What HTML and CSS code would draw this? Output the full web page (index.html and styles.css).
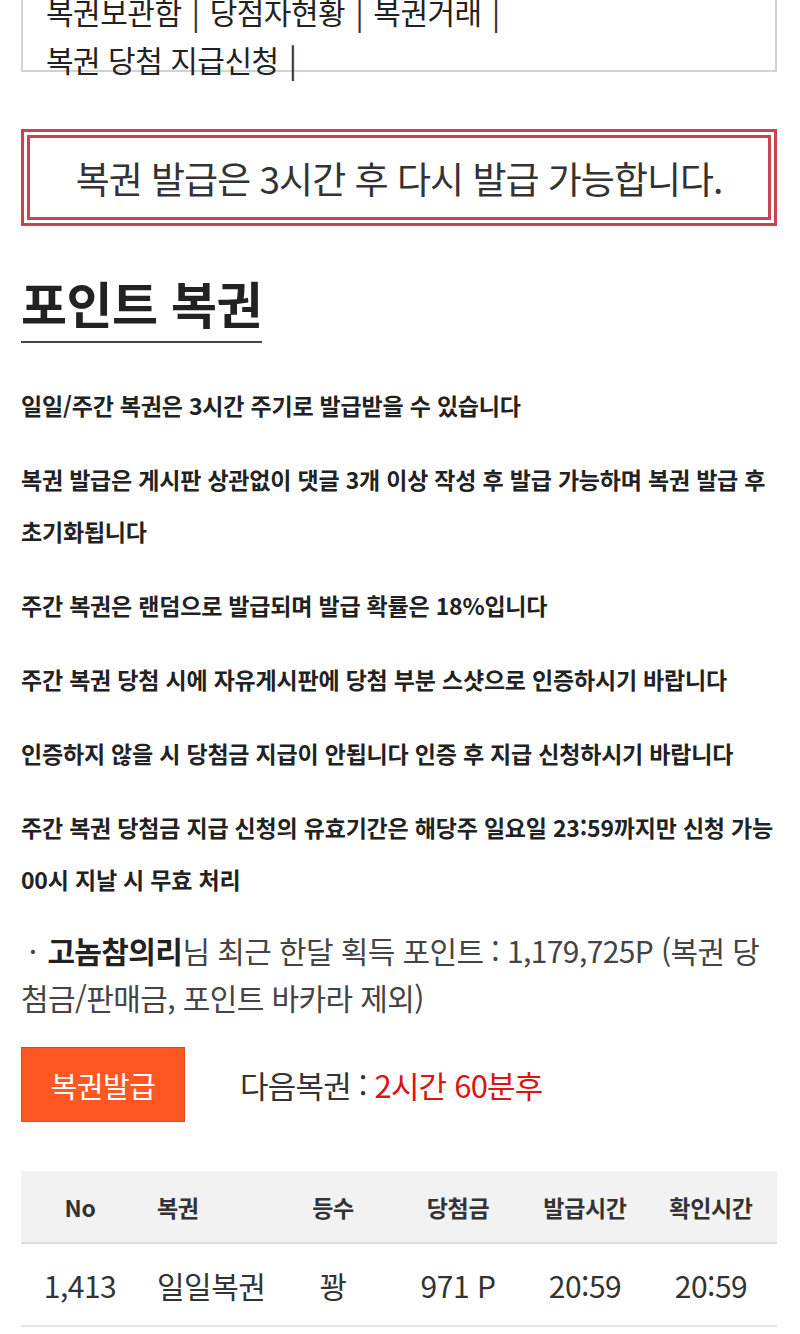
FILE: index.html
```html
<!DOCTYPE html>
<html lang="ko">
<head>
<meta charset="utf-8">
<title>포인트 복권</title>
<link rel="stylesheet" href="styles.css">
</head>
<body>
<div class="page">
  <nav class="subnav">
    <a class="navlink">복권보관함</a><span class="sep">|</span><a class="navlink">당점자현황</a><span class="sep">|</span><a class="navlink">복권거래</a><span class="sep">|</span><br><a class="navlink">복권 당첨 지급신청</a><span class="sep">|</span>
  </nav>

  <div class="alert">복권 발급은 3시간 후 다시 발급 가능합니다.</div>

  <h2 class="title">포인트 복권</h2>

  <div class="rules">
    <p>일일/주간 복권은 3시간 주기로 발급받을 수 있습니다</p>
    <p>복권 발급은 게시판 상관없이 댓글 3개 이상 작성 후 발급 가능하며 복권 발급 후 초기화됩니다</p>
    <p>주간 복권은 랜덤으로 발급되며 발급 확률은 18%입니다</p>
    <p>주간 복권 당첨 시에 자유게시판에 당첨 부분 스샷으로 인증하시기 바랍니다</p>
    <p>인증하지 않을 시 당첨금 지급이 안됩니다 인증 후 지급 신청하시기 바랍니다</p>
    <p>주간 복권 당첨금 지급 신청의 유효기간은 해당주 일요일 23:59까지만 신청 가능 00시 지날 시 무효 처리</p>
  </div>

  <p class="points">&nbsp;· <strong>고놈참의리</strong>님 최근 한달 획득 포인트 : 1,179,725P (복권 당첨금/판매금, 포인트 바카라 제외)</p>

  <div class="issue">
    <button class="btn-issue" type="button">복권발급</button>
    <span class="next">다음복권 : <span class="next-time">2시간 60분후</span></span>
  </div>

  <table class="list">
    <thead>
      <tr>
        <th class="c-no">No</th>
        <th class="c-name">복권</th>
        <th class="c-rank">등수</th>
        <th class="c-prize">당첨금</th>
        <th class="c-issued">발급시간</th>
        <th class="c-checked">확인시간</th>
      </tr>
    </thead>
    <tbody>
      <tr>
        <td class="c-no">1,413</td>
        <td class="c-name">일일복권</td>
        <td class="c-rank">꽝</td>
        <td class="c-prize">971 P</td>
        <td class="c-issued">20:59</td>
        <td class="c-checked">20:59</td>
      </tr>
    </tbody>
  </table>
</div>
</body>
</html>
```

FILE: styles.css
```css
html, body {
  margin: 0;
  padding: 0;
  background: #fff;
}
body {
  font-family: "Noto Sans CJK KR", "Noto Sans", sans-serif;
  color: #333;
  overflow: hidden;
}
.page {
  width: 756px;
  margin-left: 21px;
}
.subnav {
  display: block;
  margin-top: -40px;
  height: 83.5px;
  padding: 24.5px 23px 0 23px;
  border: 2px solid #d2d2d2;
  font-size: 30px;
  line-height: 47px;
  color: #222;
  letter-spacing: -0.5px;
}
.navlink {
  color: #222;
  text-decoration: none;
}
.sep {
  display: inline-block;
  margin: 0 10px;
  font-weight: 400;
  font-size: 32px;
  color: #333;
}
.alert {
  margin-top: 57px;
  height: 79px;
  border: 9px double #c9424f;
  display: flex;
  align-items: center;
  justify-content: center;
  font-size: 37px;
  color: #333;
  letter-spacing: -1px;
}
.title {
  display: inline-block;
  margin: 46px 0 0 0;
  padding-bottom: 9px;
  border-bottom: 2px solid #444;
  font-size: 50px;
  line-height: 60px;
  font-weight: 700;
  color: #222;
  letter-spacing: -0.5px;
}
.rules {
  margin-top: 36px;
}
.rules p {
  margin: 0 0 22px 0;
  font-size: 23px;
  line-height: 52px;
  font-weight: 700;
  color: #222;
  letter-spacing: -0.2px;
  word-break: keep-all;
}
.points {
  margin: 4px 0 0 0;
  font-size: 30px;
  line-height: 47px;
  color: #444;
  letter-spacing: -0.6px;
}
.points strong {
  font-weight: 700;
  color: #222;
  margin-left: 3px;
}
.issue {
  margin-top: 26px;
  display: flex;
  align-items: center;
}
.btn-issue {
  width: 164px;
  height: 75px;
  background: #ff5722;
  border: 1px solid #e24a1c;
  color: #fff;
  font-family: inherit;
  font-size: 29px;
  letter-spacing: -0.5px;
  padding: 0;
}
.next {
  margin-left: 55px;
  font-size: 31px;
  color: #333;
  letter-spacing: -0.8px;
}
.next-time {
  color: #e01212;
}
.list {
  margin-top: 49px;
  width: 756px;
  border-collapse: collapse;
  table-layout: fixed;
}
.list th {
  height: 71px;
  background: #f2f2f2;
  border-bottom: 2px solid #dcdcdc;
  font-size: 23px;
  font-weight: 700;
  color: #333;
  padding: 0;
  letter-spacing: -0.3px;
}
.list td {
  height: 81px;
  border-bottom: 2px solid #e4e4e4;
  font-size: 30px;
  color: #333;
  padding: 0;
  letter-spacing: -0.5px;
}
.c-no { width: 118px; text-align: center; }
.list .c-name { width: 118px; text-align: left; padding-left: 18px; }
.c-rank { width: 116px; text-align: center; }
.c-prize { width: 134px; text-align: center; }
.c-issued { width: 120px; text-align: center; }
.c-checked { width: 132px; text-align: center; }
```
